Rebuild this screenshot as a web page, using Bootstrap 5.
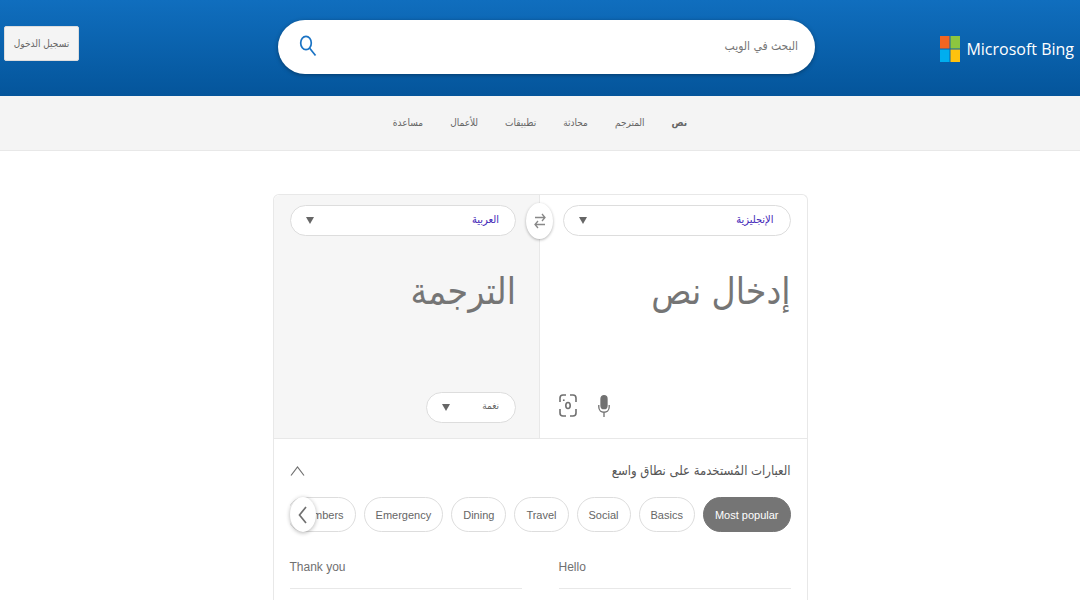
<!DOCTYPE html>
<html lang="ar" dir="rtl">
<head>
<meta charset="utf-8">
<meta name="viewport" content="width=device-width, initial-scale=1">
<title>Bing Translator</title>
<link href="https://cdn.jsdelivr.net/npm/bootstrap@5.3.0/dist/css/bootstrap.min.css" rel="stylesheet">
<style>
:root { --ink: #666; --line: #e8e8e8; --soft: #f6f6f6; }
body { font-family: "Liberation Sans", "DejaVu Sans Condensed", "DejaVu Sans", sans-serif; font-size: 12px; line-height: 20px; color: var(--ink); }
.top-bar { display: grid; grid-template-columns: 259fr 537fr 274fr; align-items: center; height: 96px; padding: 0 6px 3px 4px; background: linear-gradient(#106ebe, #04559b); }
.brand { gap: 6px; padding-top: 4px; color: #fff; font: 16px/24px "Open Sans", sans-serif; text-decoration: none; white-space: nowrap; justify-self: start; }
.search-box { height: 54px; padding: 0 17px 2px 21px; border-radius: 27px; background: #fff; box-shadow: 0 1px 4px rgba(0,0,0,.35); }
.search-box input { font-size: 12px; color: var(--ink); box-shadow: none !important; }
.search-box input::placeholder { color: #767676; opacity: 1; }
.sign-in { width: 75px; height: 35px; padding: 0; font-size: 10px; color: var(--ink); background: #f4f4f4; border: 1px solid #ddd; border-radius: 2px; justify-self: end; margin-bottom: 6px; white-space: nowrap; }
.sub-nav { height: 55px; gap: 27px; background: #f4f4f4; border-bottom: 1px solid var(--line); }
.sub-nav a { font-size: 10px; color: var(--ink); text-decoration: none; }
.translator { width: 100%; max-width: 535px; margin-top: 43px; border: 1px solid var(--line); border-bottom: 0; border-radius: 6px 6px 0 0; }
.pane { height: 243px; padding: 10px 16px 15px 23px; }
.pane-out { background: var(--soft); padding: 10px 23px 15px 16px; border-right: 1px solid var(--line); border-radius: 6px 0 0 0; }
.pill-select { height: 31px; padding: 0 16px 4px 28px; font-size: 11px; line-height: 20px; color: #4329b8; border: 1px solid #ddd; border-radius: 16px; background: #fff url("data:image/svg+xml,%3Csvg xmlns='http://www.w3.org/2000/svg' viewBox='0 0 8 7'%3E%3Cpath fill='%23666' d='M0 0h8L4 7z'/%3E%3C/svg%3E") no-repeat left 15px center / 8px 7px; }
.tone { width: 90px; font-size: 10px; color: var(--ink); }
.big-text { font-size: 37px; line-height: 56px; padding: 0; margin-top: 28px; resize: none; overflow: hidden; box-shadow: none !important; background: transparent !important; }
.big-text::placeholder { color: #757575; opacity: 1; }
.icon-btn { padding: 0; border: 0; background: none; line-height: 0; color: #707070; }
.tools { gap: 21px; padding-bottom: 6px; margin-left: -4px; }
.swap { top: 8px; left: 50%; width: 27px; height: 36px; margin-left: -14px; border-radius: 50%; background: #fff; box-shadow: 0 1px 3px rgba(0,0,0,.3); z-index: 2; }
.swap svg { color: #888; }
.phrases { padding: 20px 16px 0; border-top: 1px solid var(--line); }
.phrases h2 { font-size: 13px; line-height: 24px; color: #555; }
.chips { gap: 8px; margin-top: 14px; }
.chip { flex: none; height: 35px; padding: 0 11px; font-size: 11px; color: var(--ink); border: 1px solid #ddd; border-radius: 18px; background: #fff; }
.chip-on { color: #fff; background: #757575; border-color: #757575; }
.prev { left: 0; top: 0; width: 26px; height: 35px; border-radius: 50%; background: #fff; box-shadow: 0 1px 4px rgba(0,0,0,.3); }
.phrase-list { display: grid; grid-template-columns: 1fr 1fr; column-gap: 37px; margin-top: 14px; }
.phrase-list a { padding: 11px 0; color: #707070; text-decoration: none; border-bottom: 1px solid var(--line); text-align: left; }
</style>
</head>
<body class="d-flex flex-column min-vh-100">
<header class="top-bar">
  <a href="#" class="brand d-flex align-items-center" dir="ltr">
    <svg width="20" height="26" viewBox="0 0 21 26" preserveAspectRatio="none" aria-hidden="true"><path fill="#f26522" d="M0 0h10v12.500H0z"/><path fill="#8dc63f" d="M11 0h10v12.500H11z"/><path fill="#00aeef" d="M0 13.500h10V26H0z"/><path fill="#ffc20e" d="M11 13.500h10V26H11z"/></svg>
    <span>Microsoft Bing</span>
  </a>
  <form class="search-box d-flex align-items-center" role="search">
    <input type="search" class="form-control border-0 p-0" placeholder="البحث في الويب" aria-label="البحث في الويب">
    <button type="button" class="icon-btn" aria-label="بحث"><svg width="18" height="22" viewBox="0 0 18 22" fill="none" stroke="#1a73c4" stroke-width="1.700"><ellipse cx="7" cy="8" rx="5.300" ry="6.700"/><path d="M10.500 13l6 7.500"/></svg></button>
  </form>
  <button type="button" class="sign-in">تسجيل الدخول</button>
</header>
<nav class="sub-nav d-flex justify-content-center align-items-center">
  <a href="#" class="fw-bold">نص</a><a href="#">المترجم</a><a href="#">محادثة</a><a href="#">تطبيقات</a><a href="#">للأعمال</a><a href="#">مساعدة</a>
</nav>
<main class="translator mx-auto flex-grow-1">
  <div class="row g-0 position-relative">
    <section class="pane col-6 d-flex flex-column">
      <select class="form-select pill-select" aria-label="لغة المصدر"><option>الإنجليزية</option></select>
      <textarea class="form-control border-0 big-text flex-grow-1" placeholder="إدخال نص" aria-label="إدخال نص"></textarea>
      <div class="tools d-flex justify-content-end align-items-center">
        <button type="button" class="icon-btn" aria-label="ميكروفون"><svg width="12" height="22" viewBox="0 0 12 22" fill="none" stroke="currentColor" stroke-width="1.300"><rect x="3" y=".7" width="6" height="13" rx="3" fill="currentColor"/><path d="M.8 10v2c0 7 10.400 7 10.400 0v-2M6 17.500V22"/></svg></button>
        <button type="button" class="icon-btn" aria-label="كاميرا"><svg width="18" height="23" viewBox="0 0 18 23" fill="none" stroke="currentColor" stroke-width="1.600"><path d="M1 8V4q0-3 3-3h3M11 1h3q3 0 3 3v4M17 15v4q0 3-3 3h-3M7 22H4q-3 0-3-3v-4"/><ellipse cx="9" cy="11.500" rx="2.200" ry="3"/><circle cx="4.800" cy="6.200" r=".9" fill="currentColor" stroke="none"/></svg></button>
      </div>
    </section>
    <section class="pane pane-out col-6 d-flex flex-column">
      <select class="form-select pill-select" aria-label="لغة الهدف"><option>العربية</option></select>
      <textarea class="form-control border-0 big-text flex-grow-1" placeholder="الترجمة" aria-label="الترجمة" readonly></textarea>
      <select class="form-select pill-select tone" aria-label="نغمة"><option>نغمة</option></select>
    </section>
    <button type="button" class="icon-btn swap position-absolute" aria-label="تبديل اللغات"><svg width="12" height="16" viewBox="0 0 12 16" fill="none" stroke="currentColor" stroke-width="1.300"><path d="M1 4.500h10M8 1l3 3.500L8 8M11 11.500H1M4 8l-3 3.500L4 15"/></svg></button>
  </div>
  <section class="phrases">
    <div class="d-flex justify-content-between align-items-center">
      <h2 class="m-0">العبارات المُستخدمة على نطاق واسع</h2>
      <button type="button" class="icon-btn" aria-label="طي"><svg width="15" height="10" viewBox="0 0 15 10" fill="none" stroke="currentColor" stroke-width="1.200"><path d="M1 9.500L7.500 1 14 9.500"/></svg></button>
    </div>
    <div class="position-relative">
      <div class="chips d-flex overflow-hidden">
        <button type="button" class="chip chip-on">Most popular</button><button type="button" class="chip">Basics</button><button type="button" class="chip">Social</button><button type="button" class="chip">Travel</button><button type="button" class="chip">Dining</button><button type="button" class="chip">Emergency</button><button type="button" class="chip">Numbers</button>
      </div>
      <button type="button" class="icon-btn prev position-absolute" aria-label="السابق"><svg width="9" height="18" viewBox="0 0 9 18" fill="none" stroke="currentColor" stroke-width="1.700"><path d="M8 1L1.500 9 8 17"/></svg></button>
    </div>
    <div class="phrase-list"><a href="#">Hello</a><a href="#">Thank you</a></div>
  </section>
</main>
<script src="https://cdn.jsdelivr.net/npm/bootstrap@5.3.0/dist/js/bootstrap.bundle.min.js"></script>
</body>
</html>
